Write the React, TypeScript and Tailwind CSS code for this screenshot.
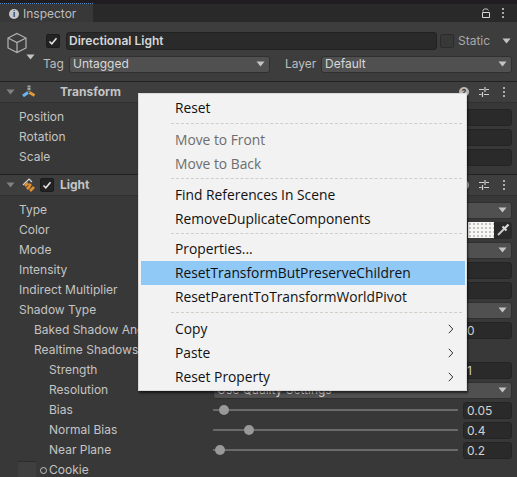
import React from 'react';

const font = { fontFamily: 'Inter, "Liberation Sans", sans-serif' };

function Caret({ className = '' }: { className?: string }) {
  return (
    <svg width="9" height="6" viewBox="0 0 9 6" className={className}>
      <path d="M0.5 0.5h8L4.5 5.5z" fill="#c4c4c4" />
    </svg>
  );
}

function Dots() {
  return (
    <svg width="4" height="12" viewBox="0 0 4 12">
      <circle cx="2" cy="2" r="1.1" fill="#c8c8c8" />
      <circle cx="2" cy="6" r="1.1" fill="#c8c8c8" />
      <circle cx="2" cy="10" r="1.1" fill="#c8c8c8" />
    </svg>
  );
}

function HeaderTools({ help = true }: { help?: boolean }) {
  return (
    <div className="flex items-center pr-[11px]">
      {help && (
        <div className="w-[10px] h-[10px] rounded-full bg-[#b8b8b8] mr-[9px] text-[8px] leading-[10px] text-center text-[#333] font-bold">?</div>
      )}
      <svg width="12" height="12" viewBox="0 0 12 12" className="mr-[12px]">
        <path d="M1 3.5h5M8 3.5h3M1 8.5h2.5M6 8.5h5M7 1v5M4.5 6v5" stroke="#d0d0d0" strokeWidth="1.2" fill="none" />
      </svg>
      <Dots />
    </div>
  );
}

function Check({ checked = true, size = 14 }: { checked?: boolean; size?: number }) {
  return (
    <div className="flex items-center justify-center rounded-[2px] bg-[#232323] border border-[#1b1b1b]" style={{ width: size, height: size }}>
      {checked && (
        <svg width="10" height="10" viewBox="0 0 10 10">
          <path d="M1.5 5.5l2.3 2.3 4.7-5.6" stroke="#e6e6e6" strokeWidth="1.5" fill="none" />
        </svg>
      )}
    </div>
  );
}

function Dropdown({ label, className = 'flex-1' }: { label: string; className?: string }) {
  return (
    <div className={`h-[17px] rounded-[3px] bg-[#505050] border border-[#303030] flex items-center justify-between pl-[3px] pr-[4px] text-[12px] text-[#d8d8d8] ${className}`}>
      <span className="truncate">{label}</span>
      <Caret />
    </div>
  );
}

function NumField({ value = '' }: { value?: string }) {
  return (
    <div className="ml-auto w-[49px] h-[17px] rounded-[3px] bg-[#2a2a2a] border border-[#242424] pl-[3px] text-[12px] leading-[15px] text-[#d2d2d2]">{value}</div>
  );
}

function Row({ indent = 19, label, children }: { indent?: number; label: string; children?: React.ReactNode }) {
  return (
    <div className="h-[20px] flex items-center text-[12px] text-[#c4c4c4] pr-[5px]">
      <span className="shrink-0 w-[213px] whitespace-nowrap overflow-hidden" style={{ paddingLeft: indent }}>{label}</span>
      <div className="flex-1 min-w-0 flex items-center">{children}</div>
    </div>
  );
}

function Slider({ value, pos }: { value: string; pos: number }) {
  return (
    <>
      <div className="relative flex-1 h-[12px] flex items-center mr-[5px]">
        <div className="w-full h-[2px] bg-[#6a6a6a]" />
        <div className="absolute w-[10px] h-[10px] rounded-full bg-[#999999] top-[1px]" style={{ left: pos }} />
      </div>
      <NumField value={value} />
    </>
  );
}

function MenuItem({ label, muted, active, arrow }: { label: string; muted?: boolean; active?: boolean; arrow?: boolean }) {
  return (
    <div className={`h-[24px] flex items-center justify-between pl-[34px] pr-[11px] text-[13.8px] ${active ? 'bg-[#90c8f6]' : ''} ${muted ? 'text-[#6d6d6d]' : 'text-[#111111]'}`}>
      <span>{label}</span>
      {arrow && (
        <svg width="6" height="10" viewBox="0 0 6 10">
          <path d="M0.8 0.8l4 4.2-4 4.2" stroke="#333" strokeWidth="1" fill="none" />
        </svg>
      )}
    </div>
  );
}

function MenuSep({ className }: { className: string }) {
  return <div className={`ml-[30px] mr-[3px] h-0 border-t border-dashed border-[#cfcfc8] ${className}`} />;
}

export default function App() {
  return (
    <div className="relative w-[517px] h-[477px] overflow-hidden bg-[#383838] select-none" style={font}>
      <div className="h-[4px] bg-[#201c20] relative">
        <div className="absolute left-0 bottom-0 w-[93px] border-t border-dotted border-[#4a90d0]" />
      </div>

      {/* tab bar */}
      <div className="h-[18px] bg-[#292929] flex items-center justify-between">
        <div className="w-[93px] h-full bg-[#383838] flex items-center pl-[9px] pt-[1px] text-[12px] text-[#bdbdbd]">
          <div className="w-[10px] h-[10px] rounded-full bg-[#c8c8c8] mr-[4px] text-[8px] leading-[10px] text-center text-[#333] font-bold">i</div>
          Inspector
        </div>
        <div className="flex items-center pr-[12px]">
          <svg width="10" height="10" viewBox="0 0 10 10" className="mr-[10px]">
            <path d="M2 3.5V2.6C2 0.4 7 0.4 7.5 2.4M1.5 4.5h7v5h-7z" stroke="#d8d8d8" strokeWidth="1" fill="none" />
          </svg>
          <Dots />
        </div>
      </div>

      {/* object header */}
      <div className="h-[60px] bg-[#3d3d3d] border-b border-[#222222] relative">
        <svg width="22" height="22" viewBox="0 0 22 22" className="absolute left-[6px] top-[10px]">
          <path d="M11 1.5l9 4.5v10l-9 4.5-9-4.5V6zM2 6l9 4.5L20 6M11 10.5v10" stroke="#b4b4b4" strokeWidth="1.2" fill="none" />
        </svg>
        <Caret className="absolute left-[26px] top-[32px]" />
        <div className="flex items-center pl-[46px] pt-[10px] pr-[6px]">
          <Check size={14} />
          <div className="ml-[6px] w-[371px] h-[18px] rounded-[3px] bg-[#2a2a2a] border border-[#212121] pl-[2px] text-[12px] leading-[16px] font-semibold text-[#d6d6d6]">Directional Light</div>
          <div className="ml-[3px] w-[14px] h-[14px] bg-[#383838] border border-[#2c2c2c] rounded-[2px]" />
          <span className="ml-[4px] text-[12px] text-[#a8a8a8]">Static</span>
          <Caret className="ml-auto" />
        </div>
        <div className="flex items-center pl-[43px] pt-[5px] pr-[5px] text-[12px] text-[#bdbdbd]">
          <span className="w-[26px]">Tag</span>
          <Dropdown label="Untagged" className="w-[201px]" />
          <span className="ml-[15px] w-[36px]">Layer</span>
          <Dropdown label="Default" className="flex-1" />
        </div>
      </div>

      {/* Transform */}
      <div className="h-[21px] bg-[#3e3e3e] border-b border-[#303030] flex items-center justify-between">
        <div className="flex items-center">
          <Caret className="ml-[6px] opacity-50" />
          <svg width="14" height="14" viewBox="0 0 14 14" className="ml-[7px]">
            <path d="M7 0.5v6" stroke="#9ca89a" strokeWidth="3" strokeDasharray="2 0.6" />
            <path d="M6 7.5l-5 3.5" stroke="#6eb4ec" strokeWidth="3" />
            <path d="M7.5 7.5l5 3" stroke="#e09a38" strokeWidth="3" />
          </svg>
          <span className="ml-[24px] text-[12px] font-bold text-[#c4c4c4]">Transform</span>
        </div>
        <HeaderTools />
      </div>
      <div className="h-[72px] pt-[4px] border-b border-[#222222]">
        <Row label="Position"><NumField /></Row>
        <Row label="Rotation"><NumField /></Row>
        <Row label="Scale"><NumField /></Row>
      </div>

      {/* Light */}
      <div className="h-[21px] bg-[#3e3e3e] border-b border-[#303030] flex items-center justify-between">
        <div className="flex items-center">
          <Caret className="ml-[6px] opacity-50" />
          <svg width="14" height="14" viewBox="0 0 14 14" className="ml-[7px]">
            <path d="M1 7l6-6 3 3" stroke="#d8d8d8" strokeWidth="1.2" fill="none" />
            <path d="M3 8l3-3M5 11l3-3M8 13l4-4M7 6l2 2" stroke="#e09030" strokeWidth="2.6" />
          </svg>
          <div className="ml-[4px]"><Check size={14} /></div>
          <span className="ml-[6px] text-[12px] font-bold text-[#c4c4c4]">Light</span>
        </div>
        <HeaderTools />
      </div>
      <div className="pt-[4px]">
        <Row label="Type"><Dropdown label="" /></Row>
        <Row label="Color">
          <div className="flex-1 flex justify-end items-center">
            <div className="w-[26px] h-[16px] bg-[#f6f6f6] bg-[radial-gradient(#c4c4bc_1px,transparent_1px)] bg-[length:4px_4px]" />
            <div className="w-[18px] h-[17px] bg-[#2a2a2a] rounded-r-[3px] flex items-center justify-center">
              <svg width="14" height="14" viewBox="0 0 14 14">
                <path d="M2 12l6-6" stroke="#c8c8c8" strokeWidth="2" fill="none" />
                <path d="M6.5 3.5l4 4M9 5l3.5-3.5" stroke="#d8d8d8" strokeWidth="2.2" fill="none" />
              </svg>
            </div>
          </div>
        </Row>
        <Row label="Mode"><Dropdown label="" /></Row>
        <Row label="Intensity"><NumField /></Row>
        <Row label="Indirect Multiplier"><NumField /></Row>
        <Row label="Shadow Type"><Dropdown label="" /></Row>
        <Row indent={34} label="Baked Shadow Angle"><NumField value="0" /></Row>
        <Row indent={34} label="Realtime Shadows"></Row>
        <Row indent={49} label="Strength"><NumField value="1" /></Row>
        <Row indent={49} label="Resolution"><Dropdown label="Use Quality Settings" /></Row>
        <Row indent={49} label="Bias"><Slider value="0.05" pos={6} /></Row>
        <Row indent={49} label="Normal Bias"><Slider value="0.4" pos={31} /></Row>
        <Row indent={49} label="Near Plane"><Slider value="0.2" pos={2} /></Row>
        <div className="h-[20px] flex items-center text-[12px] text-[#c4c4c4]">
          <div className="ml-[18px] w-[18px] h-[18px] bg-[#3f3f3f] border-t border-[#2c2c2c]" />
          <div className="ml-[4px] w-[7px] h-[7px] rounded-full border border-[#c4c4c4]" />
          <span className="ml-[2px]">Cookie</span>
        </div>
      </div>

      {/* context menu */}
      <div className="absolute left-[138px] top-[93px] w-[329px] h-[298px] bg-[#f2f2f2] border border-[#dadada] pl-[2px] pr-[1px] pt-[2px] shadow-[1px_2px_2px_rgba(0,0,0,0.6)]" style={{ fontFamily: '"Open Sans", "Noto Sans", sans-serif' }}>
        <MenuItem label="Reset" />
        <MenuSep className="mt-[3px] mb-[4px]" />
        <MenuItem label="Move to Front" muted />
        <MenuItem label="Move to Back" muted />
        <MenuSep className="mt-[2px] mb-[4px]" />
        <MenuItem label="Find References In Scene" />
        <MenuItem label="RemoveDuplicateComponents" />
        <MenuSep className="mt-[2px] mb-[3px]" />
        <MenuItem label="Properties..." />
        <MenuItem label="ResetTransformButPreserveChildren" active />
        <MenuItem label="ResetParentToTransformWorldPivot" />
        <MenuSep className="mt-[3px] mb-[4px]" />
        <MenuItem label="Copy" arrow />
        <MenuItem label="Paste" arrow />
        <MenuItem label="Reset Property" arrow />
      </div>
    </div>
  );
}
